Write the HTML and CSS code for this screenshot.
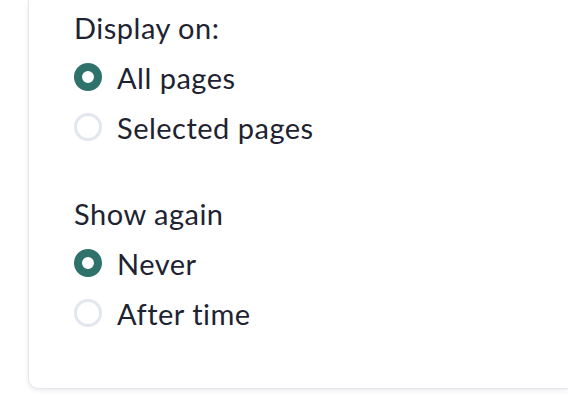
FILE: index.html
```html
<!DOCTYPE html>
<html lang="en">
<head>
<meta charset="utf-8">
<link rel="stylesheet" href="styles.css">
</head>
<body>
<div class="page">
  <div class="card">
    <div class="group">
      <div class="heading">Display on:</div>
      <label class="option"><span class="radio checked"></span><span class="label">All pages</span></label>
      <label class="option"><span class="radio"></span><span class="label">Selected pages</span></label>
    </div>
    <div class="group second">
      <div class="heading">Show again</div>
      <label class="option"><span class="radio checked"></span><span class="label">Never</span></label>
      <label class="option"><span class="radio"></span><span class="label">After time</span></label>
    </div>
  </div>
</div>
</body>
</html>
```

FILE: styles.css
```css
html, body {
  margin: 0;
  padding: 0;
  background: #ffffff;
}
body {
  width: 568px;
  height: 408px;
  overflow: hidden;
  font-family: "Lato", "Noto Sans", sans-serif;
  color: #1e2331;
}
.page {
  padding-left: 28px;
}
.card {
  background: #ffffff;
  border: 1px solid #e3e5eb;
  border-top: 0;
  border-right: 0;
  border-radius: 0 0 0 10px;
  box-shadow: 0 2px 4px rgba(30, 35, 60, 0.08);
  padding: 10px 0 50px 45px;
}
.group {
  display: flex;
  flex-direction: column;
}
.group.second {
  margin-top: 44px;
}
.heading {
  font-size: 29px;
  letter-spacing: 0.5px;
  line-height: 36px;
  margin-bottom: 6px;
}
.option {
  display: flex;
  align-items: center;
  height: 50px;
  gap: 15px;
  font-size: 29px;
  letter-spacing: 0.5px;
}
.radio {
  box-sizing: border-box;
  width: 28px;
  height: 28px;
  border-radius: 50%;
  border: 3px solid #e2e6ee;
  background: #ffffff;
  flex: none;
}
.radio.checked {
  border: 8px solid #2f716b;
}
```
